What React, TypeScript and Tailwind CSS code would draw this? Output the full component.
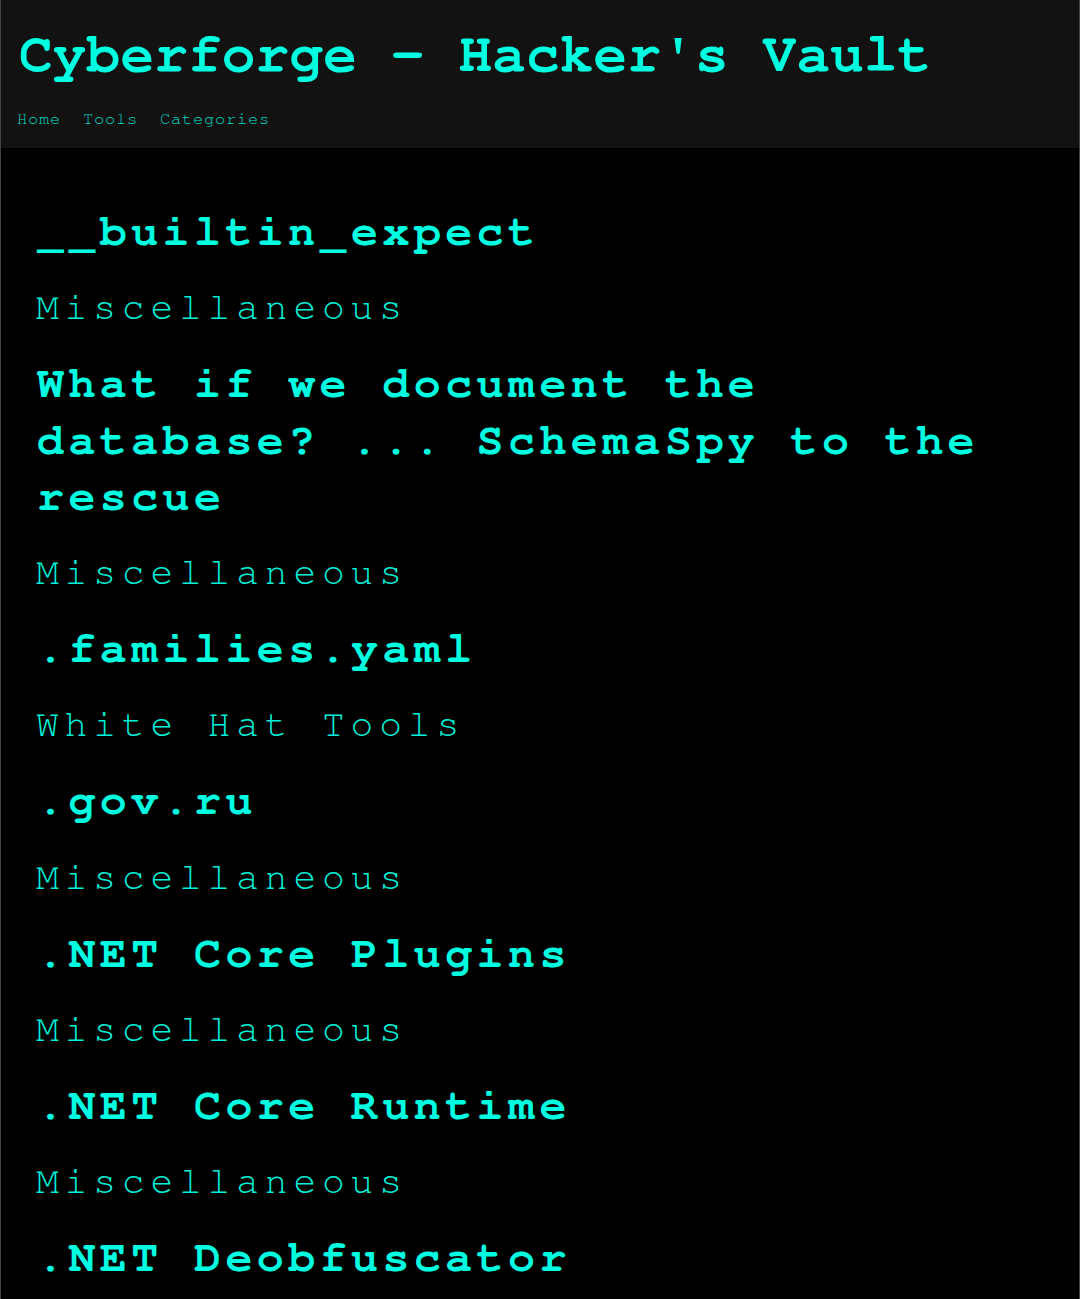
const tools = [
  { name: '__builtin_expect', category: 'Miscellaneous' },
  { name: 'What if we document the database? ... SchemaSpy to the rescue', category: 'Miscellaneous' },
  { name: '.families.yaml', category: 'White Hat Tools' },
  { name: '.gov.ru', category: 'Miscellaneous' },
  { name: '.NET Core Plugins', category: 'Miscellaneous' },
  { name: '.NET Core Runtime', category: 'Miscellaneous' },
  { name: '.NET Deobfuscator', category: 'Miscellaneous' },
];

export default function App() {
  return (
    <div className="min-h-screen bg-black border-x border-[#444] font-['Nimbus_Mono_PS','Nimbus_Mono_L','Courier_10_Pitch','FreeMono','Liberation_Mono',monospace]">
      {/* Header */}
      <header className="h-[148px] bg-[#121212] px-4 pt-[22px]">
        <h1 className="pl-[2px] text-[56px] leading-[64px] font-bold tracking-[0.2px] text-[#00ffe1]">
          Cyberforge - Hacker's Vault
        </h1>
        <nav className="mt-[23px] flex gap-[22px] text-[17px] leading-5 tracking-[0.8px] text-[#00dcc8]">
          <a href="#">Home</a>
          <a href="#">Tools</a>
          <a href="#">Categories</a>
        </nav>
      </header>

      {/* Tool list */}
      <main className="px-[35px] pt-[56px]">
        {tools.map((tool) => (
          <div key={tool.name} className="mb-[19px]">
            <h2 className="pl-[1px] text-[45px] leading-[56.25px] font-bold tracking-[4.4px] text-[#00ffe1]">
              {tool.name}
            </h2>
            <p className="mt-[20px] text-[38px] leading-[57px] tracking-[5.8px] text-[#00f0da]">
              {tool.category}
            </p>
          </div>
        ))}
      </main>
    </div>
  );
}
